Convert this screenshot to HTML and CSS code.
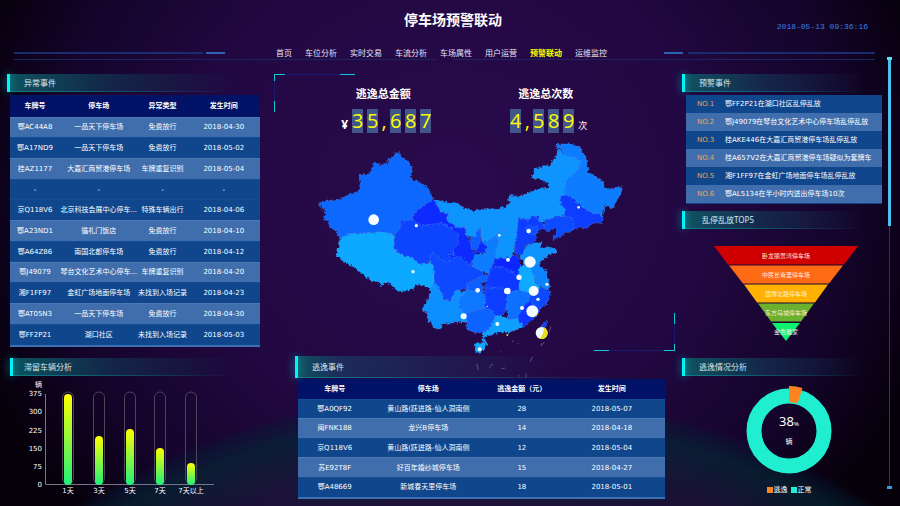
FILE: index.html
```html
<!DOCTYPE html>
<html>
<head>
	<meta charset="utf-8">
	<title>停车场预警联动</title>
	<link rel="stylesheet" href="styles.css">
</head>
<body>
	<header class="top">
		<h1>停车场预警联动</h1>
		<time class="clock">2018-05-13 09:36:16</time>
	</header>

	<div class="page">
		<div class="content">
			<div class="navbar">
				<div class="rule rule-left"></div>
				<nav>
					<a href="#">首页</a>
					<a href="#">车位分析</a>
					<a href="#">实时交易</a>
					<a href="#">车流分析</a>
					<a href="#">车场属性</a>
					<a href="#">用户运营</a>
					<a href="#" class="active">预警联动</a>
					<a href="#">运维监控</a>
				</nav>
				<div class="rule rule-right"></div>
			</div>

			<main class="board">
				<div class="col">
					<section class="panel events">
						<h2>异常事件</h2>
						<table class="data">
							<colgroup><col class="w20"><col class="w31"><col class="w20"><col></colgroup>
							<thead>
								<tr><th>车牌号</th><th>停车场</th><th>异常类型</th><th>发生时间</th></tr>
							</thead>
							<tbody>
								<tr class="light"><td>鄂AC44A8</td><td>一品天下停车场</td><td>免费放行</td><td>2018-04-30</td></tr>
								<tr><td>鄂A17ND9</td><td>一品天下停车场</td><td>免费放行</td><td>2018-05-02</td></tr>
								<tr class="light"><td>桂AZ1177</td><td>大嘉汇商贸港停车场</td><td>车牌重复识别</td><td>2018-05-04</td></tr>
								<tr><td>-</td><td>-</td><td>-</td><td>-</td></tr>
								<tr><td>京Q118V6</td><td>北京科技会展中心停车...</td><td>特殊车辆出行</td><td>2018-04-06</td></tr>
								<tr class="light"><td>鄂A23ND1</td><td>循礼门饭店</td><td>免费放行</td><td>2018-04-10</td></tr>
								<tr><td>鄂A64Z86</td><td>南国北都停车场</td><td>免费放行</td><td>2018-04-12</td></tr>
								<tr class="light"><td>鄂J49079</td><td>琴台文化艺术中心停车...</td><td>车牌重复识别</td><td>2018-04-20</td></tr>
								<tr><td>湘F1FF97</td><td>金虹广场地面停车场</td><td>未找到入场记录</td><td>2018-04-23</td></tr>
								<tr class="light"><td>鄂AT05N3</td><td>一品天下停车场</td><td>免费放行</td><td>2018-04-30</td></tr>
								<tr><td>鄂FF2P21</td><td>湖口社区</td><td>未找到入场记录</td><td>2018-05-03</td></tr>
							</tbody>
						</table>
					</section>

					<section class="panel stay">
						<h2>滞留车辆分析</h2>
						<svg class="bars" width="210" height="122" viewBox="10 377 210 122">
							<defs>
								<linearGradient id="bar" x1="0" y1="0" x2="0" y2="1">
									<stop offset="0" stop-color="#ffff00"/>
									<stop offset="1" stop-color="#1ff07a"/>
								</linearGradient>
							</defs>
							<g class="axis-y">
								<text x="42" y="388">辆</text>
								<text x="42" y="397">375</text>
								<text x="42" y="415">300</text>
								<text x="42" y="434">225</text>
								<text x="42" y="452">150</text>
								<text x="42" y="470">75</text>
								<text x="42" y="488">0</text>
							</g>
							<path class="axis" d="M45.500 395V485.500H214"/>
							<g class="track">
								<rect x="62.500" y="393" width="11" height="92" rx="5.500"/>
								<rect x="93.500" y="393" width="11" height="92" rx="5.500"/>
								<rect x="124.500" y="393" width="11" height="92" rx="5.500"/>
								<rect x="154.500" y="393" width="11" height="92" rx="5.500"/>
								<rect x="185.500" y="393" width="11" height="92" rx="5.500"/>
							</g>
							<g fill="url(#bar)">
								<rect x="64" y="395" width="8" height="91" rx="4"/>
								<rect x="95" y="437" width="8" height="49" rx="4"/>
								<rect x="126" y="430" width="8" height="56" rx="4"/>
								<rect x="156" y="449" width="8" height="37" rx="4"/>
								<rect x="187" y="464" width="8" height="22" rx="4"/>
							</g>
							<g class="axis-x">
								<text x="68" y="494">1天</text>
								<text x="99" y="494">3天</text>
								<text x="130" y="494">5天</text>
								<text x="160" y="494">7天</text>
								<text x="191" y="494">7天以上</text>
							</g>
						</svg>
					</section>
				</div>

				<div class="col center">
					<section class="overview">
						<div class="metrics">
							<div class="metric">
								<h3>逃逸总金额</h3>
								<p class="number"><b>¥</b><i>3</i><i>5</i><s>,</s><i>6</i><i>8</i><i>7</i></p>
							</div>
							<div class="metric">
								<h3>逃逸总次数</h3>
								<p class="number"><i>4</i><s>,</s><i>5</i><i>8</i><i>9</i><small>次</small></p>
							</div>
						</div>

						<svg class="map" width="325" height="211" viewBox="0 0 975 633">
							<defs>
								<filter id="coast" x="-5%" y="-5%" width="110%" height="110%">
									<feTurbulence type="fractalNoise" baseFrequency="0.12" numOctaves="2" seed="4"/>
									<feDisplacementMap in="SourceGraphic" scale="14" xChannelSelector="R" yChannelSelector="G"/>
								</filter>
							</defs>
							<g class="provinces" filter="url(#coast)">
								<!-- 新疆 -->
								<path fill="#0a68ff" d="M16 190L22 184L48 178L52 186L75 178L100 165L125 156L136 140L132 104L165 102L172 82L180 68L192 74L215 74L222 55L238 50L240 38L256 38L258 52L280 66L292 85L285 115L320 130L345 150L354 178L330 194L305 212L292 230L295 240L256 242L258 262L240 284L200 276L145 282L105 280L78 294L68 290L66 272L45 262L38 242L25 236L32 222L28 208L18 206Z"/>
								<!-- 西藏 -->
								<path fill="#0aa8ff" d="M78 294L105 280L145 282L200 276L238 285L236 325L260 345L290 352L312 372L340 372L346 362L356 378L358 425L345 447L328 436L305 436L285 450L250 454L222 430L208 428L201 440L196 428L165 420L140 400L118 380L100 372L80 358L64 350L66 325L74 322L70 305Z"/>
								<!-- 青海 -->
								<path fill="#0a44ff" d="M240 284L258 262L256 242L295 240L320 258L350 252L380 250L410 265L430 285L430 310L415 325L418 345L400 345L410 360L390 368L370 352L358 338L346 345L340 372L312 372L290 352L260 345L236 325Z"/>
								<!-- 甘肃 -->
								<path fill="#0a2cff" d="M292 230L305 212L330 194L354 180L368 182L375 215L402 220L395 240L425 262L450 260L450 280L465 300L470 325L480 345L468 375L455 376L440 355L425 348L410 360L400 345L418 345L415 325L430 310L430 285L410 265L380 250L350 252L320 258L295 240ZM485 310L500 300L516 320L510 340L480 336Z"/>
								<!-- 内蒙古 -->
								<path fill="#0a94ff" d="M360 180L395 186L425 190L450 205L475 214L510 206L550 208L580 196L585 186L578 170L590 165L605 172L650 155L680 145L705 146L697 130L675 118L650 115L660 85L680 82L705 75L725 45L732 25L742 42L780 55L800 65L785 95L755 120L750 150L757 166L735 170L740 195L753 205L745 228L720 232L693 240L675 245L670 230L650 228L645 240L610 235L607 262L575 262L545 285L520 300L500 300L496 265L480 290L455 288L450 262L425 262L395 240L402 220L375 215Z"/>
								<!-- 宁夏 -->
								<path fill="#0a5cff" d="M466 292L480 290L488 265L498 275L496 300L485 330L470 325Z"/>
								<!-- 黑龙江 -->
								<path fill="#0a7cff" d="M722 18L735 12L770 12L795 25L812 50L820 95L840 110L865 122L868 142L885 150L900 145L922 140L918 160L900 190L895 205L870 198L865 220L862 235L840 222L800 200L780 180L755 168L746 150L755 120L785 95L800 65L780 55L742 45L738 22L725 26Z"/>
								<!-- 吉林 -->
								<path fill="#0a3cff" d="M733 170L755 165L780 180L800 200L840 222L850 218L865 238L860 250L835 248L815 265L795 260L775 270L775 240L760 228L745 228L753 205L740 195Z"/>
								<!-- 辽宁 -->
								<path fill="#0a4cff" d="M685 250L693 240L720 232L745 228L770 232L778 250L775 272L750 280L735 292L712 300L725 275L720 265L700 275L685 265Z"/>
								<!-- 河北 -->
								<path fill="#0a3cff" d="M610 235L645 240L650 228L668 230L675 245L685 250L685 265L662 278L664 292L655 310L635 315L620 345L602 345L598 305L605 290L607 262Z"/>
								<path fill="#0a50ff" d="M630 268L640 255L655 262L668 255L670 275L655 285L640 282Z"/>
								<!-- 山西 -->
								<path fill="#0a94ff" d="M545 285L575 262L607 258L605 290L598 305L598 335L590 350L540 357L545 320L553 300Z"/>
								<!-- 陕西 -->
								<path fill="#0a7cff" d="M520 300L545 283L553 300L545 320L540 357L530 380L525 402L505 395L468 378L480 345L510 340L516 320L500 300Z"/>
								<!-- 山东 -->
								<path fill="#0a94ff" d="M620 345L635 318L660 308L680 308L675 325L700 320L724 328L722 338L700 345L685 360L670 372L650 374L630 372L612 352Z"/>
								<!-- 河南 -->
								<path fill="#0a28ff" d="M538 358L590 350L602 345L615 355L614 370L622 378L610 408L590 395L560 380L530 384Z"/>
								<!-- 江苏 -->
								<path fill="#0a84ff" d="M624 374L670 370L690 390L700 420L706 440L695 448L678 442L662 425L655 400L640 385Z"/>
								<!-- 安徽 -->
								<path fill="#0aaaff" d="M616 378L640 378L655 400L660 425L676 442L662 462L640 458L612 452L610 430L608 405Z"/>
								<!-- 湖北 -->
								<path fill="#0a38ff" d="M525 385L560 380L590 395L612 408L612 430L612 452L578 462L560 445L508 442L520 410Z"/>
								<!-- 湖南 -->
								<path fill="#0a3cff" d="M510 440L560 445L578 460L575 505L560 532L530 522L512 505L508 470Z"/>
								<!-- 江西 -->
								<path fill="#0a70ff" d="M578 460L612 450L645 458L645 480L625 500L610 538L580 538L573 505Z"/>
								<!-- 浙江 -->
								<path fill="#0a48ff" d="M660 462L678 444L700 450L708 460L702 478L695 490L675 507L642 484L645 460Z"/>
								<!-- 福建 -->
								<path fill="#0a34ff" d="M642 482L675 505L670 520L650 540L620 562L605 545L622 502Z"/>
								<!-- 广东 -->
								<path fill="#0aa0ff" d="M503 580L520 568L530 552L540 528L560 528L580 538L610 538L622 560L600 570L580 578L555 576L530 585L508 590L510 606L500 600Z"/>
								<!-- 广西 -->
								<path fill="#0a64ff" d="M446 520L480 512L512 505L530 510L540 530L530 555L510 578L480 578L455 566L456 545Z"/>
								<!-- 贵州 -->
								<path fill="#0a78ff" d="M430 470L455 450L480 452L500 455L510 470L510 505L480 512L448 520L430 502Z"/>
								<!-- 重庆 -->
								<path fill="#0a60ff" d="M455 432L480 420L500 400L522 404L512 425L500 430L508 455L480 455L456 450Z"/>
								<!-- 四川 -->
								<path fill="#0a48ff" d="M346 345L358 338L370 352L390 368L410 360L425 348L440 355L468 378L505 395L495 410L460 428L455 450L430 450L415 465L405 485L388 480L370 440L358 425L356 378L344 362Z"/>
								<!-- 云南 -->
								<path fill="#0a90ff" d="M358 425L370 440L388 480L405 485L415 465L424 450L448 458L432 475L430 500L448 520L456 545L420 548L380 552L375 570L355 562L350 548L340 545L338 518L322 512L330 490L345 470L345 445Z"/>
								<!-- 海南 台湾 -->
								<path fill="#0aa8ff" d="M477 620L488 608L518 607L512 622L496 640L480 636Z"/>
								<path fill="#0a3cff" d="M675 585L678 560L695 543L692 565L680 592Z"/>
							</g>
							<path class="islands" d="M485 672L490 690M524 677L534 674M522 684L527 682M560 686L570 684M645 665L653 650M633 700L633 713M610 706L614 709M678 618L688 606M703 575L708 560M560 636L558 634M590 604L597 604M608 612L611 610M676 615L680 610"/>
							<g fill="#f4fcff">
								<circle cx="176" cy="239" r="16"/>
								<circle cx="304" cy="257" r="5"/>
								<circle cx="294" cy="395" r="5"/>
								<circle cx="488" cy="451" r="7"/>
								<circle cx="446" cy="529" r="9"/>
								<circle cx="517" cy="499" r="2"/>
								<circle cx="494" cy="628" r="6"/>
								<circle cx="791" cy="202" r="4"/>
								<circle cx="641" cy="273" r="7"/>
								<circle cx="553" cy="286" r="4"/>
								<circle cx="579" cy="359" r="6"/>
								<circle cx="645" cy="366" r="17"/>
								<circle cx="612" cy="412" r="8"/>
								<circle cx="577" cy="453" r="10"/>
								<circle cx="656" cy="453" r="15"/>
								<circle cx="696" cy="433" r="5"/>
								<circle cx="669" cy="478" r="5"/>
								<circle cx="652" cy="514" r="18"/>
								<circle cx="621" cy="504" r="6"/>
								<circle cx="547" cy="552" r="6"/>
								<circle cx="680" cy="579" r="18"/>
							</g>
							<path fill="#e8dc1c" d="M686 562A18 18 0 0 1 674 596Q688 582 686 562ZM669 512A18 18 0 0 1 659 530Q664 524 669 512Z"/>
							<circle fill="#e8dc1c" cx="577" cy="585" r="3"/>
						</svg>
					</section>

					<section class="panel escapes">
						<h2>逃逸事件</h2>
						<table class="data">
							<colgroup><col class="w20"><col class="w31"><col class="w20"><col></colgroup>
							<thead>
								<tr><th>车牌号</th><th>停车场</th><th>逃逸金额（元）</th><th>发生时间</th></tr>
							</thead>
							<tbody>
								<tr><td>鄂A0QF92</td><td>黄山路(跃进路-仙人洞南侧</td><td>28</td><td>2018-05-07</td></tr>
								<tr class="light"><td>闽FNK188</td><td>龙兴B停车场</td><td>14</td><td>2018-04-18</td></tr>
								<tr><td>京Q118V6</td><td>黄山路(跃进路-仙人洞南侧</td><td>12</td><td>2018-05-04</td></tr>
								<tr class="light"><td>苏E92T8F</td><td>好百年婚纱城停车场</td><td>15</td><td>2018-04-27</td></tr>
								<tr><td>鄂A48669</td><td>新城春天里停车场</td><td>18</td><td>2018-05-01</td></tr>
							</tbody>
						</table>
					</section>
				</div>

				<div class="col">
					<section class="panel warnings">
						<h2>预警事件</h2>
						<ol>
							<li><span>NO.1</span>鄂FF2P21在湖口社区乱停乱放</li>
							<li><span>NO.2</span>鄂J49079在琴台文化艺术中心停车场乱停乱放</li>
							<li><span>NO.3</span>桂AKE446在大嘉汇商贸港停车场乱停乱放</li>
							<li><span>NO.4</span>桂A657V2在大嘉汇商贸港停车场疑似为套牌车</li>
							<li><span>NO.5</span>湘F1FF97在金虹广场地面停车场乱停乱放</li>
							<li><span>NO.6</span>鄂AL5134在半小时内进出停车场10次</li>
						</ol>
					</section>

					<section class="panel top5">
						<h2>乱停乱放TOP5</h2>
						<svg class="funnel" width="144" height="96" viewBox="714 246 144 96">
							<path fill="#d00000" d="M714 246H858L844 264.500H728Z"/>
							<path fill="#ff6a14" d="M729 265.500H843L829 283.500H743Z"/>
							<path fill="#ffb000" d="M744 284.500H828L815 302.500H757Z"/>
							<path fill="#6cb030" d="M758 303.500H814L801 321.500H771Z"/>
							<path fill="#0cf070" d="M772 323H800L786 341Z"/>
							<text x="786" y="258">卧龙丽景湾停车场</text>
							<text x="786" y="277">中民长青里停车场</text>
							<text x="786" y="296">国博北路停车场</text>
							<text x="786" y="315">东方马城停车场</text>
							<text x="786" y="334">金色雅家</text>
						</svg>
					</section>

					<section class="panel ratio">
						<h2>逃逸情况分析</h2>
						<div class="ratio-body">
							<svg class="donut" width="92" height="92" viewBox="-46 -46 92 92">
								<circle r="35" fill="none" stroke="#20eed0" stroke-width="15"/>
								<path fill="#ff8420" d="M0 -45A45 45 0 0 1 13.500 -43L8.500 -27.500A29 29 0 0 0 0 -29Z"/>
								<text class="value" x="0" y="-5">38<tspan class="unit">%</tspan></text>
								<text x="0" y="13">辆</text>
							</svg>
							<ul class="legend">
								<li class="escape">逃逸</li>
								<li class="normal">正常</li>
							</ul>
						</div>
					</section>
				</div>
			</main>
		</div>

		<div class="rail"></div>
	</div>
</body>
</html>
```
FILE: styles.css
```css
* {
	box-sizing: border-box;
	margin: 0;
	padding: 0;
}
body {
	min-height: 100vh;
	color: #fff;
	font: 7px/10px "DejaVu Sans", "Noto Sans CJK SC", sans-serif;
	background:
		radial-gradient(circle at 53% 226%, rgba(34,20,62,0.7) 0, rgba(28,24,58,0.7) 76vw, rgba(4,38,52,0.7) 81vw, rgba(6,28,52,0.4) 83vw, transparent 84vw),
		radial-gradient(ellipse 56% 95% at 50% 38%, #2a0b4e 0, #220842 50%, #14042a 80%, #050009 100%);
	background-color: #050009;
}
h1, h2, h3, nav {
	font-family: "Noto Sans", "Noto Sans CJK SC", sans-serif;
}
.top {
	display: grid;
	grid-template-columns: 1fr auto 1fr;
	height: 46px;
	padding: 10px 32px 0 38px;
}
h1 {
	grid-column: 2;
	font-size: 14px;
	line-height: 20px;
	height: 20px;
}
.clock {
	justify-self: end;
	padding-top: 12px;
	color: #3a7fe6;
	font: 8px/10px "Liberation Mono", monospace;
}
.page {
	display: flex;
	gap: 2px;
	padding: 0 8px 8px 7px;
}
.content {
	flex: 1;
}

/* navigation */
.navbar {
	display: grid;
	grid-template-columns: 1fr auto 1fr;
	gap: 54px;
	height: 14px;
	margin: 0 10px 14px 7px;
	background: linear-gradient(90deg, #1b2660 0 49%, transparent 49% 51%, #1b2660 51%) bottom / 100% 1px no-repeat;
}
nav {
	display: flex;
	gap: 13px;
	margin: 0 3px 0 -3px;
}
nav a {
	color: #e8e4f4;
	font-size: 8px;
	line-height: 14px;
	text-decoration: none;
}
nav .active {
	color: #ff0;
	font-weight: bold;
}
.rule {
	height: 2px;
	margin-top: 6px;
}
.rule-left {
	background: linear-gradient(90deg, #192c70 calc(100% - 22px), transparent 0 calc(100% - 19px), #2c62b4 0);
}
.rule-right {
	background: linear-gradient(270deg, #192c70 calc(100% - 24px), transparent 0 calc(100% - 19px), #2c62b4 0);
}

/* columns */
.board {
	display: grid;
	grid-template-columns: 253fr 408fr 203fr;
	gap: 7px;
}
.col {
	min-width: 0;
}
.center {
	padding-left: 7px;
}
.panel h2 {
	position: relative;
	height: 18px;
	padding-left: 17px;
	color: #d8e8f0;
	font-size: 8px;
	font-weight: normal;
	line-height: 17px;
	background:
		linear-gradient(90deg, #0c7c88, transparent 90%) bottom / 100% 1px no-repeat,
		linear-gradient(90deg, rgba(14,92,102,0.9), rgba(18,52,84,0.7) 40%, transparent 90%);
}
.panel h2::before {
	content: "";
	position: absolute;
	left: 0;
	top: 0;
	width: 3px;
	height: 100%;
	background: #00f6f6;
	box-shadow: 0 0 8px rgba(0,230,230,0.7);
}

/* tables */
.data {
	width: 100%;
	table-layout: fixed;
	border-collapse: collapse;
	border-bottom: 2px solid #3c70b4;
	text-align: center;
}
.data th {
	height: 22px;
	background: #021266;
}
.data td {
	background: #0f468c;
	border-top: 1px solid #154d94;
	white-space: nowrap;
}
.data .light td {
	background: #406eac;
	border-color: #4c78b4;
}
.w20 { width: 20%; }
.w31 { width: 31%; }

.events .data {
	width: calc(100% - 3px);
	height: 252px;
	margin: 3px 0 0 3px;
}
.stay {
	margin-top: 11px;
	padding-left: 3px;
}
.stay h2 {
	padding-left: 14px;
}
svg {
	display: block;
}
svg text {
	fill: #fff;
	font-size: 7px;
	text-anchor: middle;
}
.bars .axis-y text {
	text-anchor: end;
}
.bars .axis {
	fill: none;
	stroke: #77738a;
}
.bars .track {
	fill: none;
	stroke: #4c4658;
}

/* overview */
.overview {
	position: relative;
	height: 277px;
	padding-top: 13px;
}
/* corner brackets */
.overview::before, .overview::after {
	content: "";
	position: absolute;
	width: 81px;
	height: 38px;
	background:
		linear-gradient(90deg, #10c8d8 11px, #161a70 0 66px, #10c8d8 0) top / 100% 1px no-repeat,
		linear-gradient(#10c8d8 7px, #161a70 0 27px, #10c8d8 0) left / 1px 100% no-repeat;
}
.overview::before {
	left: 0;
	top: 0;
}
.overview::after {
	right: 0;
	bottom: 0;
	transform: rotate(180deg);
}
.metrics {
	display: grid;
	grid-template-columns: 1fr 1fr;
	height: 53px;
	padding: 0 48px 0 28px;
}
.metric {
	text-align: center;
}
.metric h3 {
	font-size: 11px;
	line-height: 14px;
}
.number {
	display: flex;
	justify-content: center;
	align-items: flex-end;
	gap: 4px;
	margin-top: 8px;
	padding-left: 6px;
	font-family: "Open Sans", "Noto Sans CJK SC", sans-serif;
}
.number i, .number s {
	display: flex;
	justify-content: center;
	width: 11px;
	color: #ff0;
	font-size: 20px;
	font-style: normal;
	line-height: 24px;
	text-decoration: none;
	background: #42568c;
}
.number s {
	width: 4px;
	background: none;
}
.number b {
	font-size: 12px;
	line-height: 16px;
}
.number small {
	font-size: 9px;
	line-height: 14px;
}
.map {
	position: relative;
	z-index: 1;
	margin-left: 41px;
	overflow: visible;
}
.provinces {
	stroke: rgba(90,150,255,0.5);
	stroke-width: 2;
	stroke-linejoin: round;
}
.islands {
	fill: none;
	stroke: #5a5080;
	stroke-width: 3;
}
.escapes {
	margin: 5px 10px 0 21px;
}
.escapes h2 {
	height: 22px;
	line-height: 21px;
	background:
		linear-gradient(90deg, #0c7c88, transparent 90%) bottom / 100% 1px no-repeat,
		linear-gradient(90deg, rgba(14,92,102,0.9), rgba(26,52,96,0.8) 12%, transparent 70%);
}
.escapes .data {
	width: calc(100% - 3px);
	height: 120px;
	margin: 1px 0 0 3px;
}
.escapes .data th {
	height: 20px;
}

/* right column */
.warnings ol {
	margin: 3px 3px 0 4px;
	border-bottom: 1px solid #0f468c;
	list-style: none;
}
.warnings li {
	display: flex;
	height: 18px;
	padding-left: 11px;
	line-height: 18px;
	white-space: nowrap;
	background: #0f468c;
}
.warnings li:nth-child(even) {
	background: #406eac;
}
.warnings span {
	width: 28px;
	color: #f0a060;
}
.top5 {
	margin-top: 7px;
}
.top5 h2 {
	padding-left: 20px;
}
.funnel {
	margin: 17px auto 0 32px;
}
.funnel text {
	fill: #ffeedd;
	font-size: 6px;
}
.ratio {
	margin-top: 16px;
}
.ratio-body {
	padding: 9px 0 0 11px;
}
.donut {
	margin: 0 auto;
}
.donut .value {
	font-family: "Noto Sans", sans-serif;
	font-size: 13px;
}
.donut .unit {
	font-size: 6px;
}
.legend {
	display: flex;
	justify-content: center;
	gap: 3px;
	margin-top: 8px;
	list-style: none;
}
.legend li {
	display: flex;
	align-items: center;
	gap: 1px;
}
.legend li::before {
	content: "";
	width: 6px;
	height: 6px;
	background: #ff8420;
}
.legend .normal::before {
	background: #20eed0;
}

/* scroll rail */
.rail {
	width: 5px;
	height: 432px;
	margin-top: 11px;
	background:
		linear-gradient(#5ce0f8, #5ce0f8) top / 5px 3px no-repeat,
		linear-gradient(#30a0e8, #30a0e8) bottom / 5px 3px no-repeat,
		linear-gradient(#4cc0ee, #4cc0ee) top / 3px 169px no-repeat,
		linear-gradient(#263668, #263668) center / 1px 100% no-repeat;
}
```
